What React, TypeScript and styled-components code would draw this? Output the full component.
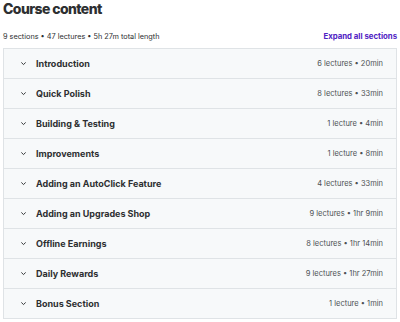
import React, { FC } from 'react';
import styled, { createGlobalStyle } from 'styled-components';

const GlobalStyle = createGlobalStyle`
  body {
    margin: 0;
    background: #ffffff;
    font-family: Inter, 'Noto Sans', sans-serif;
    color: #2d2f31;
  }
`;

const Page = styled.div`
  width: 400px;
  padding: 0 3px 0 3px;
  box-sizing: border-box;
`;

const Title = styled.h2`
  margin: 0;
  padding-left: 0;
  font-size: 14px;
  font-weight: 800;
  line-height: 18px;
  letter-spacing: -0.6px;
`;

const SummaryRow = styled.div`
  display: flex;
  justify-content: space-between;
  align-items: center;
  height: 16px;
  margin-top: 10px;
  margin-bottom: 4px;
`;

const Summary = styled.span`
  font-size: 7.3px;
  color: #2d2f31;
`;

const ExpandLink = styled.button`
  border: none;
  background: none;
  padding: 0;
  font-family: inherit;
  font-size: 7.8px;
  font-weight: 700;
  color: #5022c3;
  cursor: pointer;
`;

const Sections = styled.div`
  border: 1px solid #dfe3e6;
`;

const SectionRow = styled.div<{ $last?: boolean }>`
  display: flex;
  align-items: center;
  height: 29px;
  padding: 0 13px 0 16px;
  background: #f7f9fa;
  border-bottom: ${(p) => (p.$last ? 'none' : '1px solid #dfe3e6')};
`;

const Chevron = styled.svg`
  width: 7px;
  height: 7px;
  margin-right: 9px;
  flex-shrink: 0;
`;

const SectionTitle = styled.span`
  flex: 1;
  font-size: 9px;
  font-weight: 700;
  color: #2d2f31;
`;

const SectionMeta = styled.span`
  font-size: 7.5px;
  color: #4d5154;
`;

const sections = [
  { title: 'Introduction', meta: '6 lectures • 20min' },
  { title: 'Quick Polish', meta: '8 lectures • 33min' },
  { title: 'Building & Testing', meta: '1 lecture • 4min' },
  { title: 'Improvements', meta: '1 lecture • 8min' },
  { title: 'Adding an AutoClick Feature', meta: '4 lectures • 33min' },
  { title: 'Adding an Upgrades Shop', meta: '9 lectures • 1hr 9min' },
  { title: 'Offline Earnings', meta: '8 lectures • 1hr 14min' },
  { title: 'Daily Rewards', meta: '9 lectures • 1hr 27min' },
  { title: 'Bonus Section', meta: '1 lecture • 1min' },
];

const App: FC = () => {
  return (
    <Page>
      <GlobalStyle />
      <Title>Course content</Title>
      <SummaryRow>
        <Summary>9 sections • 47 lectures • 5h 27m total length</Summary>
        <ExpandLink>Expand all sections</ExpandLink>
      </SummaryRow>
      <Sections>
        {sections.map((s, i) => (
          <SectionRow key={s.title} $last={i === sections.length - 1}>
            <Chevron viewBox="0 0 8 8">
              <path d="M1.5 2.8 L4 5.2 L6.5 2.8" fill="none" stroke="#2d2f31" strokeWidth="1.1" />
            </Chevron>
            <SectionTitle>{s.title}</SectionTitle>
            <SectionMeta>{s.meta}</SectionMeta>
          </SectionRow>
        ))}
      </Sections>
    </Page>
  );
};

export default App;
